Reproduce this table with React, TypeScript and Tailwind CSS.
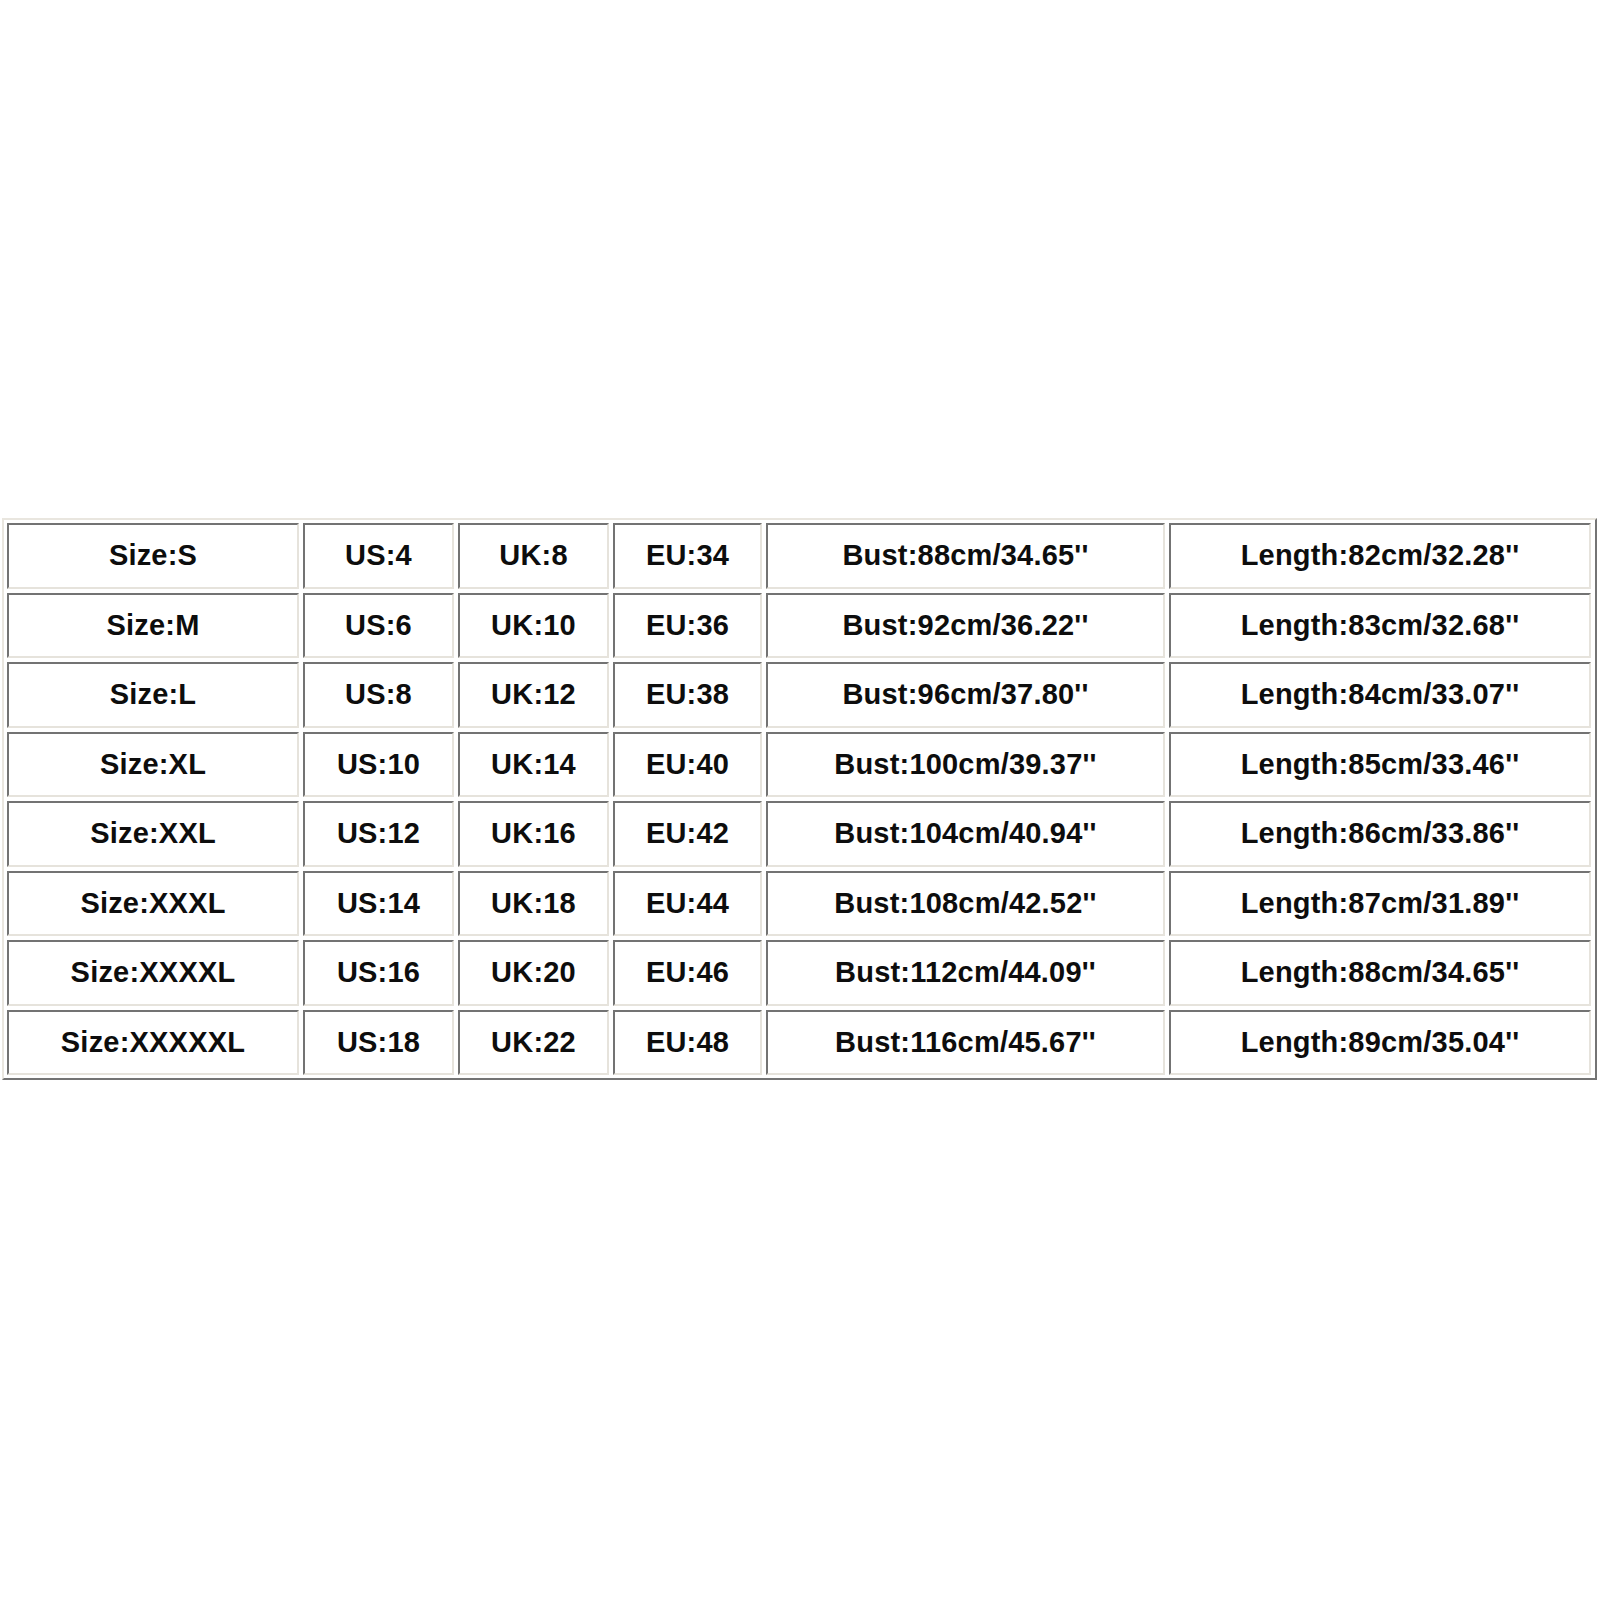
import React from "react";

const rows: string[][] = [
  ["Size:S", "US:4", "UK:8", "EU:34", "Bust:88cm/34.65''", "Length:82cm/32.28''"],
  ["Size:M", "US:6", "UK:10", "EU:36", "Bust:92cm/36.22''", "Length:83cm/32.68''"],
  ["Size:L", "US:8", "UK:12", "EU:38", "Bust:96cm/37.80''", "Length:84cm/33.07''"],
  ["Size:XL", "US:10", "UK:14", "EU:40", "Bust:100cm/39.37''", "Length:85cm/33.46''"],
  ["Size:XXL", "US:12", "UK:16", "EU:42", "Bust:104cm/40.94''", "Length:86cm/33.86''"],
  ["Size:XXXL", "US:14", "UK:18", "EU:44", "Bust:108cm/42.52''", "Length:87cm/31.89''"],
  ["Size:XXXXL", "US:16", "UK:20", "EU:46", "Bust:112cm/44.09''", "Length:88cm/34.65''"],
  ["Size:XXXXXL", "US:18", "UK:22", "EU:48", "Bust:116cm/45.67''", "Length:89cm/35.04''"],
];

export default function App() {
  return (
    <div className="w-[1600px] h-[1600px] bg-white pt-[518px] pl-[2px]" style={{ fontFamily: '"Liberation Sans", Arial, sans-serif' }}>
      <div className="w-[1595px] border-2 border-t-[#e9e6df] border-l-[#e9e6df] border-b-[#747474] border-r-[#747474] p-[3px]">
        <div className="grid grid-cols-[292px_151px_151px_149px_399px_422px] auto-rows-[65.5px] gap-[4px]">
          {rows.flatMap((r, i) =>
            r.map((c, j) => (
              <div
                key={`${i}-${j}`}
                className="flex items-center justify-center border-2 border-t-[#737373] border-l-[#737373] border-b-[#e6e3dc] border-r-[#e6e3dc] text-[29px] font-bold text-[#0d0d0d] leading-none tracking-[0.2px]"
              >
                {c}
              </div>
            ))
          )}
        </div>
      </div>
    </div>
  );
}
